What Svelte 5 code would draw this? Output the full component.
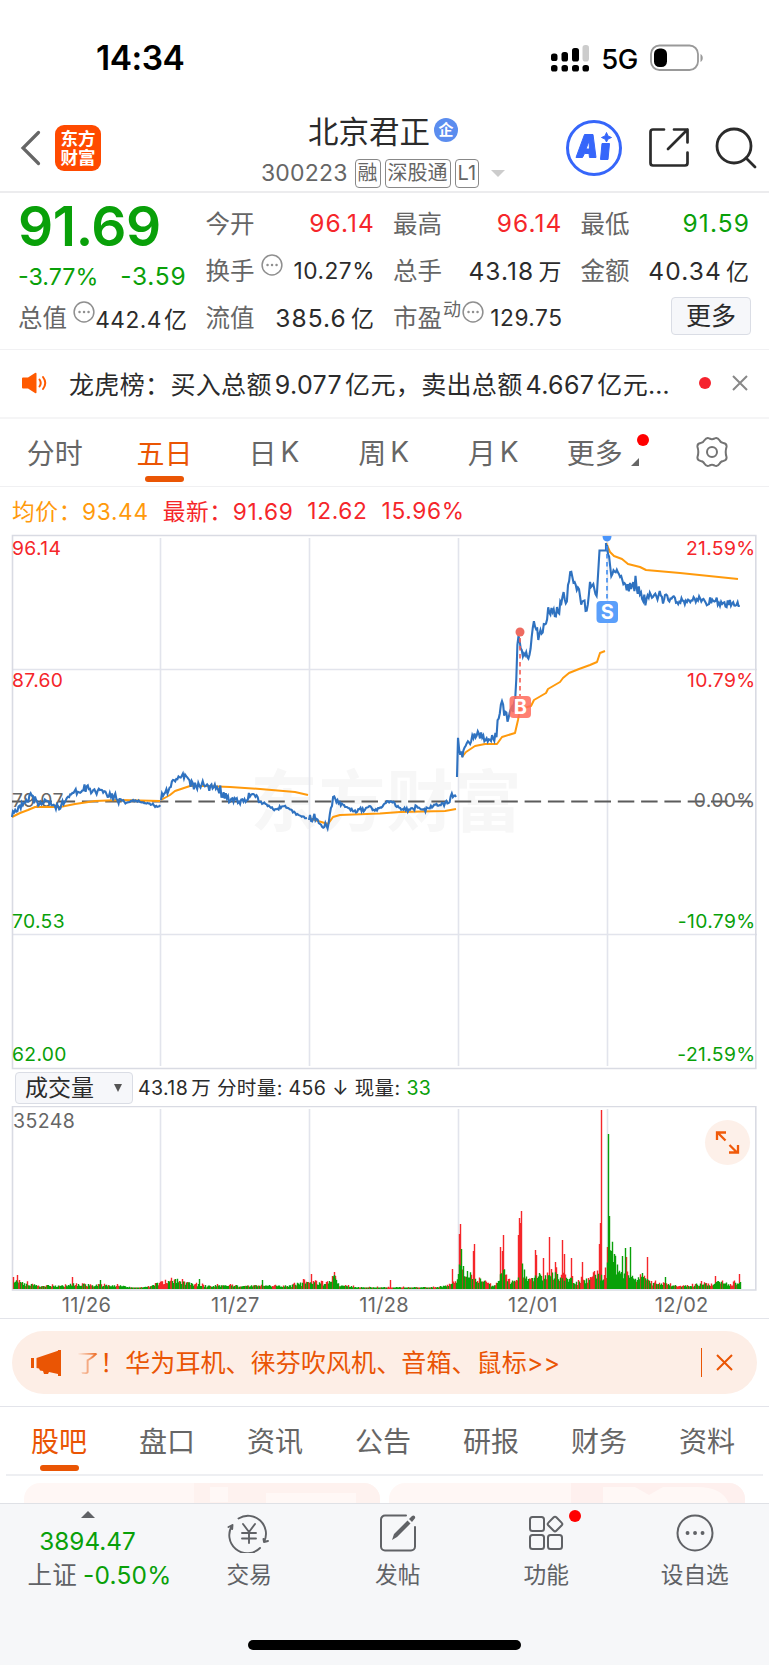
<script lang="ts">
	type Point = [number, number];

	const quoteColumns = [
		[
			{ label: '今开', value: '96.14', tone: 'up' },
			{ label: '换手', value: '10.27%', tone: '', info: true },
			{ label: '流值', value: '385.6', unit: '亿', tone: '' }
		],
		[
			{ label: '最高', value: '96.14', tone: 'up' },
			{ label: '总手', value: '43.18', unit: '万', tone: '' },
			{ label: '市盈', value: '129.75', tone: '', sup: '动', info: true }
		]
	];

	const periods = ['分时', '五日', '日K', '周K', '月K', '更多'];
	const sections = ['股吧', '盘口', '资讯', '公告', '研报', '财务', '资料'];
	let activePeriod = $state('五日');
	let activeSection = $state('股吧');

	const gridX = [160.5, 309.5, 458.5, 607.5];
	const dates = ['11/26', '11/27', '11/28', '12/01', '12/02'];

	// 价格线: 每个交易日的关键点与抖动幅度
	const priceDays: { jitter: number; points: Point[] }[] = [
		{
			jitter: 3.4,
			points: [[12, 817], [13, 812], [20, 808], [24, 803], [28, 798], [30, 796], [34, 800], [40, 805], [47, 801], [53, 806], [58, 808], [63, 803], [68, 798], [72, 793], [80, 792], [88, 787], [92, 791], [98, 790], [106, 792], [113, 797], [120, 800]]
		},
		{ jitter: 1, points: [[120, 800], [127, 803], [133, 800], [140, 802], [148, 804], [157, 806], [160, 805]] },
		{
			jitter: 3.6,
			points: [[161, 800], [164, 796], [168, 791], [172, 783], [178, 778], [180, 777], [186, 777], [190, 783], [197, 788], [204, 784], [210, 788], [219, 789], [225, 797], [233, 799], [243, 801], [250, 797], [255, 796], [260, 802]]
		},
		{ jitter: 1.3, points: [[260, 802], [267, 805], [275, 809], [285, 806], [293, 812], [300, 816], [307, 818]] },
		{
			jitter: 4,
			points: [[309, 820], [314, 818], [318, 822], [322, 824], [327, 827], [329, 818], [331, 807], [334, 797], [338, 802], [343, 805]]
		},
		{
			jitter: 2.2,
			points: [[343, 805], [348, 809], [355, 812], [363, 809], [370, 807], [376, 811], [383, 806], [388, 801], [393, 803], [399, 809], [407, 810], [415, 808], [425, 809], [433, 807], [441, 804], [449, 802], [451, 796], [456, 797]]
		},
		{
			jitter: 4.6,
			points: [[457, 777], [458, 742], [459, 750], [462, 758], [465, 743], [470, 744], [472, 730], [475, 735], [480, 735], [484, 741], [490, 739], [496, 738], [498, 718], [502, 698], [504, 712], [508, 716], [513, 708], [516, 690], [517.5, 638], [519, 638], [522, 651], [525, 655], [528, 656], [531, 648], [533, 627], [535, 627], [538, 638], [541, 629], [545, 627], [548, 614], [553, 611], [558, 613], [563, 597], [566, 601], [571, 574], [575, 585], [579, 588], [581, 604], [584, 603], [587, 610], [590, 587], [594, 587], [597, 592]]
		},
		{ jitter: 0, points: [[597, 592], [599.5, 550.5], [606, 550.5], [606, 543]] },
		{
			jitter: 6,
			points: [[607, 545], [608, 558], [612, 573], [620, 570], [623, 582], [629, 587], [636, 584], [642, 596], [646, 602], [650, 593], [653, 598], [657, 593], [664, 600]]
		},
		{ jitter: 3.8, points: [[664, 600], [672, 597], [684, 602], [695, 599], [705, 603], [712, 600], [722, 604], [730, 603], [739, 605]] }
	];

	const averageDays: Point[][] = [
		[[12, 817], [20, 813], [28, 810], [35, 807], [60, 807], [75, 804], [95, 801], [120, 800], [160, 801]],
		[[161, 800], [170, 795], [175, 791], [190, 786], [205, 786], [230, 787], [260, 789], [295, 792], [308, 795]],
		[[309, 818], [318, 821], [328, 824], [333, 817], [340, 815], [380, 813.5], [400, 812], [445, 811], [456, 809]],
		[[462, 757], [466, 752], [475, 746], [485, 744], [497, 744], [502, 737], [515, 733], [518, 720], [520, 709], [531, 706], [534, 700], [546, 693], [548, 689], [560, 682], [563, 678], [569, 673], [579, 669], [590, 665], [597, 662], [600, 653], [605, 651]],
		[[606, 543], [610, 552], [614, 556], [622, 559], [628, 564], [640, 567], [646, 570], [680, 573], [738, 579]]
	];

	// 成交量: 基础高度包络
	const volumeLevels: Point[] = [
		[12, 13], [17, 9], [24, 7], [30, 6], [38, 4], [60, 4], [72, 6], [90, 5], [120, 4], [135, 1], [150, 3], [162, 9], [178, 11], [188, 7], [205, 4], [225, 4], [260, 4], [290, 4], [309, 10], [316, 7], [328, 7], [334, 15], [340, 5], [360, 2], [435, 2], [450, 5], [457, 10], [459, 40], [463, 26], [470, 18], [480, 11], [490, 5], [497, 6], [503, 24], [508, 8], [516, 12], [522, 28], [527, 10], [533, 12], [538, 18], [545, 15], [556, 18], [566, 14], [576, 9], [590, 12], [598, 16], [606, 18], [609, 62], [613, 50], [616, 26], [628, 18], [634, 11], [640, 15], [645, 20], [650, 8], [665, 6], [675, 4], [690, 5], [705, 7], [718, 8], [730, 6], [739, 9]
	];

	const volumeSpikes: [number, number, string][] = [
		[17, 14, 'r'], [72, 12, 'r'], [100, 9, 'g'], [199, 10, 'g'], [262, 9, 'g'], [311, 15, 'r'], [334, 17, 'r'], [335, 13, 'r'], [390, 9, 'r'],
		[452, 20, 'r'], [459, 55, 'r'], [460, 65, 'r'], [461, 40, 'g'], [473, 38, 'r'], [474, 45, 'r'], [500, 42, 'r'], [503, 54, 'r'], [502, 38, 'r'],
		[518, 54, 'r'], [519, 71, 'r'], [520, 66, 'r'], [521, 78, 'r'], [535, 39, 'r'], [536, 34, 'r'], [543, 31, 'r'], [549, 52, 'r'],
		[555, 27, 'r'], [562, 49, 'r'], [564, 35, 'r'], [571, 31, 'r'], [582, 27, 'r'], [594, 18, 'r'], [599, 45, 'r'],
		[600, 66, 'r'], [601, 179, 'r'], [607, 42, 'r'], [608, 155, 'g'], [609, 73, 'g'], [622, 33, 'g'], [625, 41, 'g'],
		[626, 32, 'r'], [630, 42, 'g'], [647, 32, 'r'], [665, 12, 'g'], [715, 13, 'r'], [739, 15, 'r']
	];

	function createRandom(seed: number) {
		return () => {
			seed = (seed * 16807) % 2147483647;
			return seed / 2147483647;
		};
	}

	function valueAt(points: Point[], x: number) {
		for (let i = 1; i < points.length; i++) {
			const [x0, y0] = points[i - 1];
			const [x1, y1] = points[i];
			if (x <= x1) return y0 + ((y1 - y0) * (x - x0)) / (x1 - x0 || 1);
		}
		return points[points.length - 1][1];
	}

	function toPath(points: Point[]) {
		return points.map(([x, y], i) => `${i ? 'L' : 'M'}${x} ${y.toFixed(1)}`).join('');
	}

	function pricePath(points: Point[], jitter: number, seed: number) {
		if (!jitter) return toPath(points);
		const random = createRandom(seed);
		const result: Point[] = [points[0]];
		for (let x = points[0][0] + 1; x < points[points.length - 1][0]; x += 1.1) {
			const wave = (random() + random() - 1) * jitter * 1.5;
			result.push([+x.toFixed(1), valueAt(points, x) + wave]);
		}
		result.push(points[points.length - 1]);
		return toPath(result);
	}

	function buildVolume() {
		const random = createRandom(4217);
		const paths: Record<string, string> = { r: '', g: '' };
		for (let x = 13; x < 741; x++) {
			const green = (x > 608 && x < 624) || random() > 0.38;
			const height = Math.max(1.4, valueAt(volumeLevels, x) * (green ? 0.5 + random() * 0.5 : 0.4 + random() * 0.85));
			paths[green ? 'g' : 'r'] += `M${x + 0.5} 1289v${-height.toFixed(1)}`;
		}
		for (const [x, height, color] of volumeSpikes) paths[color] += `M${x + 0.5} 1289v${-height}`;
		return paths;
	}

	const volume = buildVolume();
</script>

{#snippet info()}
	<svg class="info" viewBox="0 0 22 22">
		<circle cx="11" cy="11" r="9.9" fill="none" stroke="#8f8f8f" stroke-width="1.5" />
		<path d="M6.5 11h.1M11 11h.1M15.5 11h.1" stroke="#8f8f8f" stroke-width="2.4" stroke-linecap="round" />
	</svg>
{/snippet}

<div class="screen">
	<div class="status">
		<span class="time">14:34</span>
		<div class="signals">
			<svg width="40" height="28" viewBox="0 0 40 28">
				<g fill="#000">
					<rect x="1" y="9.500" width="6.500" height="7.500" rx="2.600" />
					<rect x="11.500" y="8" width="6.500" height="9.500" rx="2.600" />
					<rect x="22" y="4" width="7" height="13.500" rx="2.600" />
					<rect x="1" y="21" width="6.500" height="6.500" rx="2.600" />
					<rect x="11.500" y="21" width="6.500" height="6.500" rx="2.600" />
					<rect x="22" y="21" width="7" height="6.500" rx="2.600" />
					<rect x="32.500" y="21" width="6.500" height="6.500" rx="2.600" />
				</g>
				<rect x="32.500" y="1" width="6.500" height="16.500" rx="2.800" fill="#ccc" />
			</svg>
			<span class="network">5G</span>
			<svg width="54" height="28" viewBox="0 0 54 28">
				<rect x="1" y="1.500" width="47" height="24.500" rx="8.500" fill="none" stroke="#999" stroke-width="1.800" />
				<rect x="4" y="4.500" width="13" height="18.500" rx="5.500" />
				<path d="M50.500 10c3 1.500 3 6.500 0 8z" fill="#999" />
			</svg>
		</div>
	</div>

	<header>
		<div class="nav-left">
			<svg width="22" height="36" viewBox="0 0 22 36">
				<path d="M18.500 2.500 3 18l15.500 15.500" fill="none" stroke="#666" stroke-width="3.200" stroke-linecap="round" />
			</svg>
			<div class="logo"><span>东方</span><span>财富</span></div>
		</div>
		<div class="title">
			<div class="name">北京君正<span class="badge">企</span></div>
			<div class="code">
				<span>300223</span>
				<span class="tag">融</span>
				<span class="tag">深股通</span>
				<span class="tag">L1</span>
				<i class="caret"></i>
			</div>
		</div>
		<div class="nav-right">
			<svg width="58" height="58" viewBox="0 0 58 58">
				<circle cx="29" cy="29" r="26.500" fill="none" stroke="#3666fa" stroke-width="3" />
				<path
					fill="#3666fa"
					stroke="#3666fa"
					stroke-linejoin="round"
					fill-rule="evenodd"
					d="M19.500 15.500h8.500l3 23h-6.500l-.5-4h-4.500l-2 4h-6.500zM24 22l-3 8h3.500zM37 24.500h7.500L43 40.500h-7.500zM41.500 13.500l1.500 3.500 3.500 1.500-3.500 1.500-1.500 3-1.500-3-3.500-1.500 3.500-1.500z"
				/>
			</svg>
			<svg class="share" width="42" height="42" viewBox="0 0 42 42">
				<path
					fill="none"
					stroke="#2b2b2b"
					stroke-width="2.700"
					stroke-linecap="round"
					stroke-linejoin="round"
					d="M16 2.500H5a2.500 2.500 0 0 0-2.500 2.500v31a2.500 2.500 0 0 0 2.500 2.500h32a2.500 2.500 0 0 0 2.500-2.500V25.500M26 2.500h13.500v13M39.500 2.500 20 22"
				/>
			</svg>
			<svg class="search" width="42" height="42" viewBox="0 0 42 42">
				<circle cx="19" cy="19" r="17" fill="none" stroke="#2b2b2b" stroke-width="2.800" />
				<path d="m31 31 9 9" stroke="#2b2b2b" stroke-width="2.800" stroke-linecap="round" />
			</svg>
		</div>
	</header>

	<section class="quote">
		<div class="col">
			<strong class="price">91.69</strong>
			<div class="change"><span>-3.77%</span><span class="diff">-3.59</span></div>
			<div class="cell">
				<span class="label">总值</span>{@render info()}
				<span class="value small">442.4<em>亿</em></span>
			</div>
		</div>
		{#each quoteColumns as column}
			<div class="col">
				{#each column as cell}
					<div class="cell">
						<span class="label">{cell.label}</span>
						{#if cell.sup}<sup>{cell.sup}</sup>{/if}
						{#if cell.info}{@render info()}{/if}
						<span class="value {cell.tone}" class:small={cell.info}>
							{cell.value}{#if cell.unit}<em>{cell.unit}</em>{/if}
						</span>
					</div>
				{/each}
			</div>
		{/each}
		<div class="col">
			<div class="cell"><span class="label">最低</span><span class="value down">91.59</span></div>
			<div class="cell"><span class="label">金额</span><span class="value">40.34<em>亿</em></span></div>
			<div class="cell"><button class="more">更多</button></div>
		</div>
	</section>

	<div class="news">
		<svg class="horn" width="28" height="24" viewBox="0 0 28 24">
			<path d="M1 7.500Q1 6.500 2 6.500h5L14 2q1.500-.8 1.500.8v18.400q0 1.600-1.500.8l-7-4.500H2q-1 0-1-1z" fill="#ff5a00" />
			<path d="M18.500 8.500q2.500 3.500 0 7M22 6q4.500 6 0 12" fill="none" stroke="#ff5a00" stroke-width="2" stroke-linecap="round" />
		</svg>
		<span class="headline">龙虎榜：买入总额<b>9.077</b>亿元，卖出总额<b>4.667</b>亿元…</span>
		<i class="dot"></i>
		<svg width="16" height="16" viewBox="0 0 16 16">
			<path d="m1 1 14 14M15 1 1 15" stroke="#888" stroke-width="2" />
		</svg>
	</div>

	<nav class="periods">
		{#each periods as period}
			<button class:active={activePeriod === period} onclick={() => (activePeriod = period)}>
				<span>{period[0]}</span><span class:latin={period[1] === 'K'}>{period[1]}</span>
				{#if period === '更多'}
					<i class="corner"></i>
					<i class="dot mark"></i>
				{/if}
			</button>
		{/each}
		<button aria-label="设置">
			<svg width="34" height="32" viewBox="0 0 34 32">
				<g fill="none" stroke="#737373" stroke-width="2" stroke-linejoin="round">
					<path d="M9.500 4.200q2.200-3.400 5-1.700 2.500 1.300 5 0 2.800-1.700 5 1.700 1.200 2.600 3.800 2.800 3.700.6 3.200 4-.8 2.500-.8 5t.8 5q.5 3.400-3.200 4-2.600.2-3.800 2.800-2.200 3.400-5 1.700-2.500-1.300-5 0-2.800 1.700-5-1.700-1.200-2.600-3.800-2.800-3.700-.6-3.200-4 .8-2.500.8-5t-.8-5q-.5-3.400 3.200-4 2.600-.2 3.800-2.800z" />
					<circle cx="17" cy="16" r="5" />
				</g>
			</svg>
		</button>
	</nav>

	<div class="legend">
		<span class="avg">均价：93.44</span>
		<span>最新：91.69</span>
		<span>12.62</span>
		<span>15.96%</span>
	</div>

	<svg class="chart" width="769" height="536" viewBox="0 534 769 536">
		<text class="watermark" x="250.500" y="826" textLength="271">东方财富</text>
		<g stroke="#e2e4ec" stroke-width="1.600" fill="none">
			{#each gridX as x}
				<path d="M{x} 538V1066" />
			{/each}
			<path d="M12 669.500H757M12 934.500H757" />
			<path d="M12.500 535.500H755.800V1068.500H12.500z" stroke="#d9dbe3" />
		</g>
		<path d="M12 801.500H757" stroke="#5b5b5b" stroke-width="2" stroke-dasharray="16.500 6.800" />
		<g class="axis">
			<text class="up" x="12" y="554.500">96.14</text>
			<text class="up" x="12" y="687">87.60</text>
			<text class="mid" x="12" y="807">79.07</text>
			<text class="down" x="12" y="927.500">70.53</text>
			<text class="down" x="12" y="1060.500">62.00</text>
		</g>
		<g class="axis" text-anchor="end">
			<text class="up" x="755.500" y="554.500">21.59%</text>
			<text class="up" x="755.500" y="687">10.79%</text>
			<text class="mid" x="755.500" y="807">0.00%</text>
			<text class="down" x="755.500" y="927.500">-10.79%</text>
			<text class="down" x="755.500" y="1060.500">-21.59%</text>
		</g>
		{#each averageDays as points}
			<path d={toPath(points)} fill="none" stroke="#ff9a0c" stroke-width="2" stroke-linejoin="round" />
		{/each}
		{#each priceDays as day, i}
			<path d={pricePath(day.points, day.jitter, 911 + i * 377)} fill="none" stroke="#2f72c0" stroke-width="2.100" />
		{/each}
		<g class="trade">
			<path d="M520 638V696" stroke="#f65b50" stroke-width="1.600" stroke-dasharray="4.500 3.500" />
			<circle cx="520" cy="632" r="4.500" fill="#ee6a60" />
			<rect x="509.500" y="696" width="21.500" height="22" rx="4" fill="#ff6b5c" opacity=".85" />
			<text x="520.300" y="714">B</text>
			<path d="M607 546V601" stroke="#3d8bef" stroke-width="1.600" stroke-dasharray="4.500 3.500" />
			<path d="M602.500 536h9q0 5-4.500 5.500-4.500-.5-4.500-5.500z" fill="#4a95fb" />
			<rect x="596.500" y="601" width="21.500" height="22" rx="4" fill="#5a9ffb" />
			<text x="607.300" y="619">S</text>
		</g>
	</svg>

	<div class="volume-head">
		<button class="select">成交量<i></i></button>
		<span class="stats">43.18<em>万</em> 分时量: 456 ↓ 现量: <b>33</b></span>
	</div>

	<svg class="chart" width="769" height="212" viewBox="0 1106 769 212">
		<g stroke="#e2e4ec" stroke-width="1.600" fill="none">
			{#each gridX as x}
				<path d="M{x} 1109V1288" />
			{/each}
			<path d="M12.500 1106.500H755.800V1290H12.500z" stroke="#d9dbe3" />
		</g>
		<text class="axis-volume" x="13" y="1128">35248</text>
		<path d={volume.r} stroke="#f5262a" stroke-width="1.400" fill="none" />
		<path d={volume.g} stroke="#09a009" stroke-width="1.400" fill="none" />
		<circle cx="727.500" cy="1142.500" r="22.500" fill="#fdf0e9" />
		<path d="m725.500 1140.500-8-8M717 1140v-7.500h9M729.500 1145l8 8M738 1145v7.500h-9" fill="none" stroke="#f05a0a" stroke-width="2.300" />
		<g class="dates" text-anchor="middle">
			{#each dates as date, i}
				<text x={86.5 + i * 148.8} y="1312">{date}</text>
			{/each}
		</g>
	</svg>

	<div class="promo-wrap">
		<div class="promo">
			<svg width="30" height="26" viewBox="0 0 30 26">
				<path d="M0 8h3v10H0zM5.500 8 27 .8V0h3v26h-3v-2l-9-2-1 2h-4l-1-3-3-.5-1-2-2.500-.5z" fill="#ea5504" />
			</svg>
			<span class="promo-text"><span class="faded">了</span>！华为耳机、徕芬吹风机、音箱、鼠标>></span>
			<i class="bar"></i>
			<svg width="17" height="17" viewBox="0 0 17 17">
				<path d="m1 1 15 15M16 1 1 16" stroke="#ea5504" stroke-width="2" />
			</svg>
		</div>
	</div>

	<nav class="sections">
		{#each sections as section}
			<button class:active={activeSection === section} onclick={() => (activeSection = section)}>
				<span>{section}</span>
			</button>
		{/each}
	</nav>
	<div class="cards">
		<svg viewBox="0 0 356 21">
			<path d="M170 0h186v21H170z" fill="#fef2ef" />
			<path d="M186 4h18v15h-18zM242 10h90v11h-90z" fill="#fff8f6" />
		</svg>
		<svg viewBox="0 0 356 21">
			<path d="M182 0h174v21H182z" fill="#fef0ee" />
			<path d="M214 4h32l14 8 14-8h34q26 0 32 17H214z" fill="#fff8f6" />
		</svg>
	</div>

	<footer>
		<div class="index">
			<i></i>
			<span class="points">3894.47</span>
			<span class="rate">上证<b>-0.50%</b></span>
		</div>
		<div class="action">
			<svg viewBox="0 0 44 40">
				<g fill="none" stroke="#606266" stroke-width="1.900" stroke-linecap="round" stroke-linejoin="round">
					<path d="M11.500 5.500A18 18 0 0 1 37 29l4-1M37 29l-.5-3M33 35A18 18 0 0 1 5.500 12l-4 2M5.500 12l-.3 4" />
					<path d="m16 11 6 8 6-8M22 19v11M15 20h14M15 25.500h14" />
				</g>
			</svg>
			<span>交易</span>
		</div>
		<div class="action">
			<svg viewBox="0 0 44 40">
				<path d="M30 2.500H9a4 4 0 0 0-4 4v27a4 4 0 0 0 4 4h26a4 4 0 0 0 4-4V14" fill="none" stroke="#606266" stroke-width="2" stroke-linecap="round" />
				<path d="m16 27 2-6L31.500 7.500l3 3L21 24zM33 6l3-3q1.500-1 2.600 0 1.200 1.400 0 2.800L36 9z" fill="#606266" />
			</svg>
			<span>发帖</span>
		</div>
		<div class="action">
			<svg viewBox="0 0 44 40">
				<g fill="none" stroke="#606266" stroke-width="2">
					<rect x="6" y="4" width="14" height="14" rx="2.500" />
					<rect x="6" y="22" width="14" height="14" rx="2.500" />
					<rect x="24" y="22" width="14" height="14" rx="2.500" />
					<path d="M29.700 4.300q1.300-1.300 2.600 0l5.500 5.600q1.200 1.100 0 2.300l-5.500 5.500q-1.300 1.300-2.600 0l-5.500-5.500q-1.200-1.200 0-2.300z" />
				</g>
			</svg>
			<span>功能</span>
			<i class="dot mark"></i>
		</div>
		<div class="action">
			<svg viewBox="0 0 44 40">
				<circle cx="22" cy="20" r="17.500" fill="none" stroke="#606266" stroke-width="2" />
				<path d="M14.500 20h.1M22 20h.1M29.500 20h.1" stroke="#606266" stroke-width="3.800" stroke-linecap="round" />
			</svg>
			<span>设自选</span>
		</div>
		<div class="home"></div>
	</footer>
</div>

<style>
	:global(body) {
		background: #fff;
	}

	.screen {
		width: 769px;
		height: 1665px;
		overflow: hidden;
		display: flex;
		flex-direction: column;
		background: #fff;
		color: #2b2b2b;
		font-family: Inter, 'Noto Sans CJK SC', sans-serif;
	}

	.screen > * {
		flex: none;
		box-sizing: border-box;
	}

	button {
		border: none;
		background: none;
		padding: 0;
		margin: 0;
		font: inherit;
		color: inherit;
	}

	em,
	i {
		font-style: normal;
	}

	b {
		font-weight: 400;
	}

	svg {
		display: block;
		flex: none;
	}

	.up {
		color: #f5262a;
		fill: #f5262a;
	}

	.down {
		color: #09a009;
		fill: #09a009;
	}

	.dot {
		width: 12px;
		height: 12px;
		border-radius: 50%;
		background: #f5222d;
	}

	.status {
		height: 108px;
		padding: 7px 65px 0 96px;
		display: flex;
		align-items: center;
		justify-content: space-between;
		color: #000;
	}

	.time {
		font-size: 33.5px;
		font-weight: 600;
		letter-spacing: -0.5px;
	}

	.signals {
		display: flex;
		align-items: center;
		gap: 12px;
	}

	.network {
		margin: 2px 0 0 -1px;
		font-size: 27.5px;
		font-weight: 500;
		letter-spacing: -0.4px;
	}

	header {
		height: 85px;
		display: grid;
		grid-template-columns: 252px 262px 1fr;
		border-bottom: 2px solid #ececee;
	}

	.nav-left {
		display: flex;
		align-items: center;
		gap: 13px;
		padding-left: 20px;
		height: 79px;
	}

	.logo {
		width: 46px;
		height: 46px;
		border-radius: 9px;
		background: #ff4a00;
		color: #fff;
		display: flex;
		flex-direction: column;
		align-items: center;
		justify-content: center;
		font-size: 17.5px;
		font-weight: 700;
		line-height: 19px;
	}

	.title {
		display: flex;
		flex-direction: column;
		align-items: center;
	}

	.name {
		display: flex;
		align-items: center;
		height: 44px;
		font-size: 30.5px;
		gap: 4px;
	}

	.badge {
		width: 24px;
		height: 24px;
		border-radius: 50%;
		background: #5b8def;
		color: #fff;
		font-size: 15px;
		font-weight: 700;
		line-height: 23px;
		text-align: center;
	}

	.code {
		display: flex;
		align-items: center;
		gap: 4px;
		height: 30px;
		margin-top: 6px;
		font-size: 23px;
		letter-spacing: 0.2px;
		color: #666;
	}

	.code > span:first-child {
		margin-right: 3px;
	}

	.tag {
		height: 29px;
		border: 1.5px solid #888;
		border-radius: 4px;
		padding: 0 2px;
		font-size: 20px;
		line-height: 27px;
		box-sizing: border-box;
		letter-spacing: 0;
	}

	.caret {
		margin-left: 8px;
		border: 7px solid transparent;
		border-top-color: #ccc;
		border-bottom: none;
	}

	.nav-right {
		display: flex;
		align-items: center;
		height: 80px;
		padding-left: 51px;
	}

	.share,
	.search {
		margin-left: 25px;
	}

	.quote {
		height: 157px;
		padding: 6px 20px 0 18px;
		display: grid;
		grid-template-columns: repeat(4, 168.5px);
		justify-content: space-between;
		border-bottom: 1.5px solid #f1f1f3;
	}

	.cell {
		height: 47px;
		display: flex;
		align-items: center;
		white-space: nowrap;
	}

	.label {
		font-size: 24.5px;
		color: #666;
	}

	.cell sup {
		font-size: 18px;
		line-height: 20px;
		margin: 0 1px 13px 1px;
		color: #666;
	}

	.info {
		width: 22px;
		height: 22px;
		margin: 0 0 10px 6px;
	}

	.cell sup + .info {
		margin-left: 0;
	}

	.value {
		margin-left: auto;
		margin-right: -1px;
		font-size: 24.5px;
		letter-spacing: 1.1px;
	}

	.value em {
		margin-left: 4px;
		font-size: 23px;
	}

	.value.small {
		font-size: 22.7px;
		letter-spacing: 0.5px;
		padding-top: 2px;
	}

	.info + .value.small em {
		margin-left: 2px;
	}

	.price {
		display: block;
		height: 54px;
		font-size: 55px;
		font-weight: 600;
		line-height: 54px;
		letter-spacing: -0.4px;
		color: #09a009;
	}

	.change {
		height: 40px;
		line-height: 47px;
		display: flex;
		justify-content: space-between;
		font-size: 23.3px;
		color: #09a009;
	}

	.diff {
		font-size: 24.5px;
		letter-spacing: 0.8px;
	}

	.more {
		width: 80px;
		height: 38px;
		margin: 0 -2px 2px auto;
		border: 1.5px solid #dadde5;
		border-radius: 4px;
		background: #f6f7fa;
		font-size: 25px;
		line-height: 34px;
	}

	.news {
		height: 69px;
		padding: 0 21px 2px 21px;
		display: flex;
		align-items: center;
		border-bottom: 2px solid #f5f5f6;
		font-size: 25px;
	}

	.headline {
		width: 610px;
		margin-left: 20px;
		white-space: nowrap;
		letter-spacing: 0.35px;
	}

	.headline b {
		margin: 0 3px;
	}

	.news .dot {
		margin: 0 21px 0 20px;
	}

	.periods {
		height: 68px;
		display: grid;
		grid-template-columns: repeat(7, 109.6px);
		border-bottom: 1.5px solid #f0f0f2;
	}

	.periods button {
		position: relative;
		display: flex;
		align-items: center;
		justify-content: center;
		padding-bottom: 1px;
		font-size: 28px;
		color: #666;
		white-space: nowrap;
	}

	.periods .latin {
		margin-left: 4px;
	}

	.periods .active,
	.sections .active {
		color: #ea5504;
	}

	.periods .active::after,
	.sections .active::after {
		content: '';
		position: absolute;
		left: 50%;
		bottom: 4px;
		width: 39px;
		height: 6px;
		margin-left: -19.5px;
		border-radius: 3px;
		background: #ea5504;
	}

	.corner {
		margin: 20px 0 0 8px;
		border-left: 8px solid transparent;
		border-bottom: 8px solid #666;
	}

	.periods .mark {
		position: absolute;
		right: 9px;
		top: 15px;
		background: #f00;
	}

	.legend {
		height: 47px;
		padding: 0 0 1px 12px;
		display: flex;
		align-items: center;
		gap: 14px;
		font-size: 22.7px;
		letter-spacing: 0.65px;
		color: #f5262a;
	}

	.legend .avg {
		color: #ff9a0c;
	}

	.chart text {
		font-family: Inter, 'Noto Sans CJK SC', sans-serif;
	}

	.chart .watermark {
		font-size: 67px;
		font-weight: 700;
		fill: #f7f7f7;
	}

	.axis {
		font-size: 19.3px;
		letter-spacing: 0.35px;
	}

	.mid,
	.axis-volume,
	.dates {
		fill: #666;
	}

	.trade text {
		font-size: 20px;
		font-weight: 700;
		text-anchor: middle;
		fill: #fff;
	}

	.axis-volume {
		font-size: 19.5px;
		letter-spacing: 0.4px;
	}

	.dates {
		font-size: 20px;
		letter-spacing: 0.3px;
	}

	.volume-head {
		height: 36px;
		padding: 0 15px 1px;
		display: flex;
		align-items: center;
		gap: 5px;
		white-space: pre;
	}

	.stats {
		padding-bottom: 2px;
		font-size: 19.5px;
		letter-spacing: 0.4px;
	}

	.select {
		width: 118px;
		height: 32px;
		box-sizing: border-box;
		padding: 0 10px 0 9px;
		display: flex;
		align-items: center;
		justify-content: space-between;
		border: 1.5px solid #dadde5;
		border-radius: 4px;
		background: #f6f7fa;
		font-size: 23px;
		line-height: 28px;
	}

	.select i {
		border: 4.5px solid transparent;
		border-top: 8px solid #555;
		border-bottom: none;
	}

	.volume-head em {
		margin-left: 3px;
	}

	.volume-head b {
		color: #09a009;
	}

	.promo-wrap {
		height: 89px;
		padding: 12px 12px 0;
		border-top: 1.5px solid #e3e4ea;
		border-bottom: 1.5px solid #e3e4ea;
	}

	.promo {
		height: 63px;
		padding: 0 24px 0 19px;
		border-radius: 32px;
		display: flex;
		align-items: center;
		background: #fdeee6;
		color: #ea5504;
		font-size: 25px;
	}

	.promo-text {
		flex: 1;
		margin-left: 14px;
		padding-bottom: 3px;
		white-space: nowrap;
		letter-spacing: 0.1px;
	}

	.faded {
		background: linear-gradient(90deg, transparent 10%, #ea5504);
		background-clip: text;
		color: transparent;
	}

	.bar {
		width: 1.5px;
		height: 29px;
		margin-right: 14px;
		background: #ea5504;
	}

	.sections {
		height: 69px;
		margin: 0 6px;
		display: grid;
		grid-template-columns: repeat(7, 108px);
		border-bottom: 2px solid #eeeff2;
	}

	.sections button {
		position: relative;
		padding: 0 2px 2px 0;
		font-size: 28px;
		color: #666;
	}

	.sections .active::after {
		bottom: 3px;
		margin-left: -20px;
	}

	.cards {
		height: 27px;
		padding: 7px 24px 0;
		display: flex;
		justify-content: space-between;
		overflow: hidden;
	}

	.cards svg {
		width: 356px;
		height: 21px;
		border-radius: 16px 16px 0 0;
		background: #fff7f5;
	}

	footer {
		position: relative;
		height: 163px;
		border-top: 1.5px solid #dfe1e6;
		background: #f6f7f9;
		display: grid;
		grid-template-columns: 175px repeat(4, 148.5px);
		align-items: start;
	}

	.index,
	.action {
		position: relative;
		display: flex;
		flex-direction: column;
		align-items: center;
		color: #606266;
	}

	.index i {
		margin-top: 7px;
		border: 7px solid transparent;
		border-top: none;
		border-bottom: 7px solid #606266;
	}

	.points {
		margin-top: 6px;
		font-size: 24.3px;
		line-height: 34px;
		color: #09a009;
	}

	.rate {
		font-size: 24.5px;
		line-height: 34px;
		padding-left: 24px;
		white-space: nowrap;
		letter-spacing: 0.2px;
	}

	.rate b {
		margin-left: 6px;
		color: #09a009;
	}

	.action svg {
		width: 44px;
		height: 40px;
		margin-top: 9px;
	}

	.action span {
		margin-top: 6px;
		font-size: 22.7px;
		line-height: 32px;
	}

	.action .mark {
		position: absolute;
		left: 97px;
		top: 6px;
		background: #f00;
	}

	.home {
		position: absolute;
		left: 248px;
		bottom: 16px;
		width: 273px;
		height: 10px;
		border-radius: 5px;
		background: #000;
	}
</style>
